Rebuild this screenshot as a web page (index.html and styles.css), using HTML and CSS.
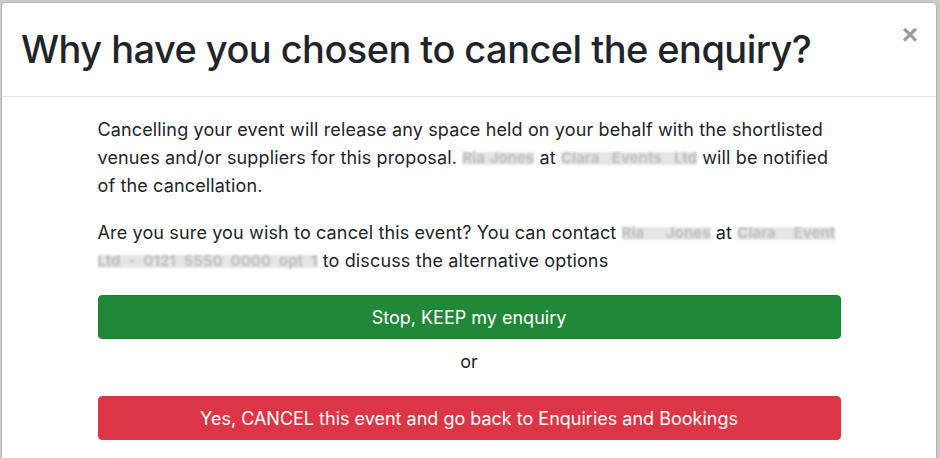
FILE: index.html
```html
<!DOCTYPE html>
<html lang="en">
<head>
<meta charset="utf-8">
<title>Cancel enquiry</title>
<link rel="stylesheet" href="styles.css">
</head>
<body>
<div class="modal">
  <div class="modal-header">
    <h1 class="modal-title">Why have you chosen to cancel the enquiry?</h1>
    <button class="close" type="button" aria-label="Close">&times;</button>
  </div>
  <div class="modal-body">
    <div class="content">
      <p>Cancelling your event will release any space held on your behalf with the shortlisted venues and/or suppliers for this proposal. <span class="redacted w72">Ria Jones</span> at <span class="redacted w136">Clara Events Ltd</span> will be notified of the cancellation.</p>
      <p>Are you sure you wish to cancel this event? You can contact <span class="redacted w89">Ria Jones</span> at <span class="redacted w98">Clara Event</span> <span class="redacted w220">Ltd - 0121 5550 0000 opt 1</span> to discuss the alternative options</p>
      <button class="btn btn-keep" type="button">Stop, KEEP my enquiry</button>
      <div class="or">or</div>
      <button class="btn btn-cancel" type="button">Yes, CANCEL this event and go back to Enquiries and Bookings</button>
    </div>
  </div>
</div>
</body>
</html>
```

FILE: styles.css
```css
html, body {
  margin: 0;
  padding: 0;
}
body {
  background: #c9c9c9;
  font-family: "Inter", "Noto Sans", "Liberation Sans", sans-serif;
  color: #212529;
  height: 458px;
  overflow: hidden;
}
.modal {
  margin: 2px 3px 0 1px;
  background: #fff;
  border: 1px solid #b5b5b5;
  border-radius: 5px;
  height: 500px;
}
.modal-header {
  display: flex;
  justify-content: space-between;
  align-items: flex-start;
  padding: 22px 18px 23px 19px;
  border-bottom: 1px solid #e3e6e9;
}
.modal-title {
  margin: 0;
  font-size: 38px;
  letter-spacing: -0.55px;
  font-weight: 500;
  line-height: 48px;
  color: #212529;
}
.close {
  background: none;
  border: 0;
  padding: 0;
  margin-top: -2px;
  font-family: "Liberation Sans", sans-serif;
  font-size: 28px;
  font-weight: 700;
  line-height: 24px;
  color: #9a9a9a;
  cursor: pointer;
}
.modal-body {
  padding: 19px 0 30px;
}
.content {
  width: 743px;
  margin: 0 auto;
}
.content p {
  margin: 0 0 19px;
  font-size: 18px;
  letter-spacing: 0.14px;
  line-height: 28px;
}
.redacted {
  display: inline-block;
  vertical-align: top;
  height: 28px;
  white-space: nowrap;
  text-align: justify;
  text-align-last: justify;
  letter-spacing: 0;
  font-size: 15px;
  font-weight: 700;
  color: #bdbdbd;
  background: linear-gradient(to bottom, transparent 8px, #e6e6e6 8px, #e6e6e6 21px, transparent 21px);
  filter: blur(1.2px);
}
.w72 { width: 72px; }
.w89 { width: 89px; }
.w98 { width: 98px; }
.w136 { width: 136px; }
.w220 { width: 220px; }
.btn {
  display: block;
  width: 100%;
  height: 44px;
  border: 1px solid transparent;
  border-radius: 4px;
  color: #fff;
  font-family: inherit;
  font-size: 18px;
  line-height: 27px;
  text-align: center;
  cursor: pointer;
}
.btn-keep {
  margin-top: 20px;
  background: #218838;
  border-color: #1e7e34;
}
.btn-cancel {
  background: #dc3545;
  border-color: #dc3545;
}
.or {
  text-align: center;
  font-size: 18px;
  line-height: 27px;
  margin: 9px 0 21px;
}
```
